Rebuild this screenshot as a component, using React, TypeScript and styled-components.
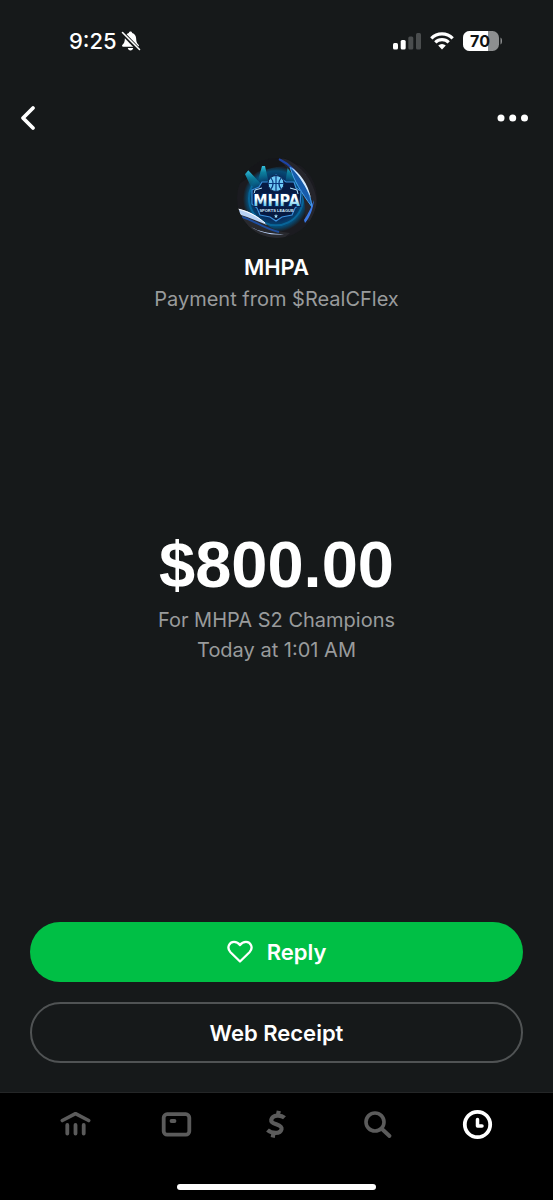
import React from 'react';
import styled, { createGlobalStyle } from 'styled-components';

const GlobalStyle = createGlobalStyle`
  * { box-sizing: border-box; }
  body {
    margin: 0;
    background: #16191a;
    color: #fff;
    font-family: Inter, 'Liberation Sans', sans-serif;
  }
  button { font: inherit; color: inherit; cursor: pointer; }
  h1, p { margin: 0; }
`;

const Screen = styled.div`
  min-height: 100vh;
  display: flex;
  flex-direction: column;
`;

const StatusBar = styled.div`
  display: flex;
  align-items: center;
  justify-content: space-between;
  height: 82px;
  padding: 0 50px 0 69px;
`;

const StatusGroup = styled.div<{ $gap: number }>`
  display: flex;
  align-items: center;
  gap: ${(p) => p.$gap}px;
`;

const Clock = styled.span`
  font-size: 22px;
  line-height: 28px;
  font-weight: 500;
`;

const Header = styled.header`
  display: flex;
  align-items: center;
  justify-content: space-between;
  height: 72px;
  padding: 0 20px 0 16px;
`;

const IconButton = styled.button`
  display: flex;
  padding: 0;
  border: 0;
  background: none;
`;

const Profile = styled.section`
  display: flex;
  flex-direction: column;
  align-items: center;
  padding-top: 4px;
`;

const Name = styled.h1`
  margin-top: 12px;
  font-size: 22px;
  line-height: 34px;
  font-weight: 600;
`;

const Detail = styled.p`
  color: #999b9c;
  font-size: 20px;
  line-height: 30px;
`;

const Payment = styled.section`
  flex: 1;
  display: flex;
  flex-direction: column;
  align-items: center;
  justify-content: center;
  padding-bottom: 46px;
`;

const Amount = styled.p`
  font-family: 'Liberation Sans', Arial, sans-serif;
  font-size: 65px;
  line-height: 80px;
  font-weight: 700;
`;

const Actions = styled.div`
  display: flex;
  flex-direction: column;
  gap: 20px;
  padding: 0 30px 29px;
`;

const ActionButton = styled.button<{ $primary?: boolean }>`
  display: flex;
  align-items: center;
  justify-content: center;
  gap: 14px;
  height: ${(p) => (p.$primary ? 60 : 61)}px;
  border: ${(p) => (p.$primary ? '0' : '2px solid #505354')};
  border-radius: 32px;
  background: ${(p) => (p.$primary ? '#00bf45' : 'transparent')};
  font-size: 22px;
  line-height: 30px;
  font-weight: 600;
`;

const Footer = styled.footer`
  height: 108px;
  display: flex;
  flex-direction: column;
  align-items: center;
  justify-content: space-between;
  padding-bottom: 10px;
  border-top: 1px solid #242627;
  background: #000;
`;

const TabBar = styled.nav`
  align-self: stretch;
  display: flex;
  justify-content: space-between;
  padding: 16px 60px 0;
`;

const Tab = styled(IconButton)<{ $active?: boolean }>`
  color: ${(p) => (p.$active ? '#fff' : '#5b5b5b')};
`;

const HomeIndicator = styled.div`
  width: 36%;
  height: 6px;
  border-radius: 3px;
  background: #fff;
`;

const BellOff = () => (
  <svg width="20" height="22" viewBox="0 0 20 22" aria-label="Silent">
    <path d="M9.5 1.5c.9 0 1.6.6 1.7 1.5 2.4.7 3.8 2.7 3.9 5.3.1 3.700 1 5.200 2.400 6.500.9.9.5 2-.8 2H2.300c-1.300 0-1.700-1.100-.8-2 1.400-1.300 2.300-2.800 2.400-6.500C4 5.700 5.400 3.700 7.800 3c.1-.9.800-1.500 1.700-1.500zM6.800 18h5.400c-.2 1.500-1.300 2.400-2.700 2.400S7 19.500 6.800 18z" fill="#fff" />
    <path d="M1 2.500 18 20" stroke="#16191a" strokeWidth="4" />
    <path d="M1.500 2.500 18.500 19.500" stroke="#fff" strokeWidth="1.600" strokeLinecap="round" />
  </svg>
);

const Signal = () => (
  <svg width="28" height="18" viewBox="0 0 28 18" aria-label="Signal">
    <rect x="0" y="11" width="5" height="6.500" rx="1.500" fill="#fff" />
    <rect x="7.700" y="8" width="5" height="9.500" rx="1.500" fill="#fff" />
    <rect x="15.300" y="4.500" width="5" height="13" rx="1.500" fill="#4a4d4e" />
    <rect x="23" y="1" width="5" height="16.500" rx="1.500" fill="#4a4d4e" />
  </svg>
);

const Wifi = () => (
  <svg width="24" height="18" viewBox="0 0 24 18" aria-label="Wi-Fi">
    <g fill="none" stroke="#fff" strokeWidth="3.200">
      <path d="M1.300 6.300a15.200 15.200 0 0 1 21.400 0" />
      <path d="M5.300 10.400a9.500 9.500 0 0 1 13.400 0" />
    </g>
    <path d="M8.200 13.500a5.400 5.400 0 0 1 7.600 0L12 17.400z" fill="#fff" />
  </svg>
);

const Battery = () => (
  <svg width="40" height="20" viewBox="0 0 40 20" aria-label="Battery 70 percent">
    <defs>
      <clipPath id="cell"><rect width="36" height="20" rx="6.500" /></clipPath>
    </defs>
    <g clipPath="url(#cell)">
      <rect width="36" height="20" fill="#8d8f90" />
      <rect width="25" height="20" fill="#fff" />
    </g>
    <path d="M37.500 6.500c2 .6 2 6.400 0 7z" fill="#8d8f90" />
    <text x="17" y="16" textAnchor="middle" fontSize="16" fontWeight="700" fill="#101314">70</text>
  </svg>
);

const Avatar = () => (
  <svg width="80" height="80" viewBox="0 0 80 80" role="img" aria-label="MHPA Sports League">
    <defs>
      <clipPath id="disc"><circle cx="40" cy="40" r="40" /></clipPath>
      <radialGradient id="glow" cx="39" cy="41" r="33" gradientUnits="userSpaceOnUse">
        <stop offset="0" stopColor="#0a3f88" />
        <stop offset=".6" stopColor="#07295c" />
        <stop offset=".85" stopColor="#074a73" />
        <stop offset="1" stopColor="#1b1c21" />
      </radialGradient>
      <linearGradient id="beam" x1="0" y1="0" x2="0" y2="1">
        <stop offset="0" stopColor="#35bfdc" />
        <stop offset=".35" stopColor="#0d7f9d" />
        <stop offset="1" stopColor="#07719a" stopOpacity="0" />
      </linearGradient>
      <linearGradient id="letters" x1="0" y1="0" x2="0" y2="1">
        <stop offset=".45" stopColor="#fff" />
        <stop offset=".8" stopColor="#65c8ea" />
      </linearGradient>
    </defs>
    <g clipPath="url(#disc)">
      <rect width="80" height="80" fill="#1b1b20" />
      <circle cx="39" cy="41" r="33" fill="url(#glow)" />
      <path d="M0 0h80v10C60 4 40 8 20 14L2 26z" fill="#151619" />
      <path d="M7 14 11 12 26 28 15 31zM66 14l3 3-4 16-10-6z" fill="url(#beam)" />
      <path d="M25 8 28 8 32 26 20 26zM51 8l3 0 5 18-11 0z" fill="url(#beam)" />
      <path d="M15 28a27 27 0 1 0 48 0" fill="none" stroke="#0a7cb4" strokeWidth="2" opacity=".6" />
      <path d="M46 0C64 6 80 25 80 48l-7 16-5-4c2-20-7-42-26-58z" fill="#25252b" />
      <path d="M42 1c12 6 19 14 24 25 4 8 7 14 9 22" fill="none" stroke="#1d43a5" strokeWidth="2" />
      <path d="M53 9c4 14 11 25 22 40-2-16-9-29-22-40z" fill="#175cab" stroke="#4aa2ea" strokeWidth="1" />
      <path d="M54 9c9 6 17 17 20 31-5-11-11-21-20-31z" fill="#d5eaff" />
      <path d="M77 42c-1 9-4 17-9 23l-1-3c4-6 7-12 10-20z" fill="#3a78e4" />
      <path d="M0 51c10 1 18 6 29 15 7 6 14 8 24 9l-6 5H18L0 66z" fill="#28292e" />
      <path d="M1 51c13 2 21 8 29 16-10-4-19-8-29-11z" fill="#b8d2f5" />
      <path d="M1 51c12 3 20 8 27 14" fill="none" stroke="#fff" strokeWidth="1" />
      <path d="M5 59c14 4 20 11 37 15" fill="none" stroke="#1d4c9d" strokeWidth="2" />
      <path d="M14 69c10 5 20 7 33 7-11 2-23-1-33-7z" fill="#c0d8ff" />
      <path d="M39 17 49 24h8l2 6 5 3-1 13-5 4-3 7-10 2-6 4-6-4-10-2-3-7-5-4V32l7-3 3-5h8z" fill="#071a42" stroke="#3a8fda" strokeWidth="1.200" />
      <circle cx="39" cy="25.500" r="8" fill="#6ec9f5" stroke="#081c48" strokeWidth="1" />
      <path d="M39 17.500v16M31 25.500h16M34 20c3 4 3 7 0 11M44 20c-3 4-3 7 0 11" fill="none" stroke="#0a3a80" strokeWidth="1.200" />
      <path d="m25 30-7 2-1 4M53 30l7 2 1 4" fill="none" stroke="#b9e7ff" strokeWidth="1" />
      <text x="39.500" y="47.500" textAnchor="middle" fontFamily="'DejaVu Sans Condensed', sans-serif" fontSize="16" fontWeight="700" fill="url(#letters)" stroke="#09245a" strokeWidth="2.200" paintOrder="stroke">MHPA</text>
      <text x="39.500" y="53.500" textAnchor="middle" fontFamily="'Liberation Sans', sans-serif" fontSize="4" fontWeight="700" fill="#d4eaff">SPORTS LEAGUE</text>
      <path d="m39 56 .6 1.500 1.500.1-1.200 1 .4 1.500-1.300-.9-1.300.9.4-1.500-1.200-1 1.500-.1z" fill="#a5e3ff" />
    </g>
  </svg>
);

const BackIcon = () => (
  <svg width="24" height="28" viewBox="0 0 24 28">
    <path d="M17 4 7 14l10 10" fill="none" stroke="#fff" strokeWidth="3.800" strokeLinecap="round" strokeLinejoin="round" />
  </svg>
);

const MoreIcon = () => (
  <svg width="40" height="28" viewBox="0 0 40 28" fill="#fff">
    <circle cx="8" cy="14" r="3.500" />
    <circle cx="19.700" cy="14" r="3.500" />
    <circle cx="31.500" cy="14" r="3.500" />
  </svg>
);

const HeartIcon = () => (
  <svg width="26" height="24" viewBox="0 0 26 24">
    <path d="M13 21.500 3.500 12.200C-.8 7.700 2.300 1.800 7 1.800c2.600 0 4.600 1.200 6 3.200 1.400-2 3.400-3.200 6-3.200 4.700 0 7.800 5.900 3.500 10.400z" fill="none" stroke="#fff" strokeWidth="2.300" strokeLinejoin="round" />
  </svg>
);

const tabs = [
  {
    label: 'Money',
    icon: (
      <>
        <path d="M2.300 11.500 15.500 4.700 28.700 11.500" strokeWidth="3.600" />
        <path d="M7.300 16v8.500M15.500 16v8.500M23.700 16v8.500" strokeWidth="3.800" />
      </>
    ),
  },
  {
    label: 'Card',
    icon: (
      <>
        <rect x="2.700" y="5.200" width="25.600" height="20.500" rx="3.500" strokeWidth="3.800" />
        <path d="M10.500 12h3" strokeWidth="3.800" />
      </>
    ),
  },
  {
    label: 'Pay',
    icon: (
      <path d="M23.500 8.800C20.500 6 11.500 5.200 10.300 10.800c-1 5.300 11.500 3.600 10.200 9.400C19.200 25.400 10.500 24.500 6.500 21M17.800 1.800l-.8 4M12.500 24.500l-.8 4" strokeWidth="4.200" strokeLinecap="butt" />
    ),
  },
  {
    label: 'Search',
    icon: (
      <>
        <circle cx="13" cy="13" r="9" strokeWidth="3.600" />
        <path d="m20 20 7.500 7" strokeWidth="3.900" />
      </>
    ),
  },
  {
    label: 'Activity',
    active: true,
    icon: (
      <>
        <circle cx="15.500" cy="15.500" r="12.700" strokeWidth="3.800" />
        <path d="M15.500 10.500v6.500h4.500" strokeWidth="3.500" />
      </>
    ),
  },
];

export default function App() {
  return (
    <Screen>
      <GlobalStyle />
      <StatusBar>
        <StatusGroup $gap={4}>
          <Clock>9:25</Clock>
          <BellOff />
        </StatusGroup>
        <StatusGroup $gap={9}>
          <Signal />
          <Wifi />
          <Battery />
        </StatusGroup>
      </StatusBar>
      <Header>
        <IconButton aria-label="Back"><BackIcon /></IconButton>
        <IconButton aria-label="More options"><MoreIcon /></IconButton>
      </Header>
      <Profile>
        <Avatar />
        <Name>MHPA</Name>
        <Detail>Payment from $RealCFlex</Detail>
      </Profile>
      <Payment>
        <Amount>$800.00</Amount>
        <Detail>For MHPA S2 Champions</Detail>
        <Detail>Today at 1:01 AM</Detail>
      </Payment>
      <Actions>
        <ActionButton $primary>
          <HeartIcon />
          Reply
        </ActionButton>
        <ActionButton>Web Receipt</ActionButton>
      </Actions>
      <Footer>
        <TabBar>
          {tabs.map((tab) => (
            <Tab key={tab.label} $active={tab.active} aria-label={tab.label}>
              <svg width="31" height="31" viewBox="0 0 31 31" fill="none" stroke="currentColor" strokeLinecap="round" strokeLinejoin="round">
                {tab.icon}
              </svg>
            </Tab>
          ))}
        </TabBar>
        <HomeIndicator />
      </Footer>
    </Screen>
  );
}
